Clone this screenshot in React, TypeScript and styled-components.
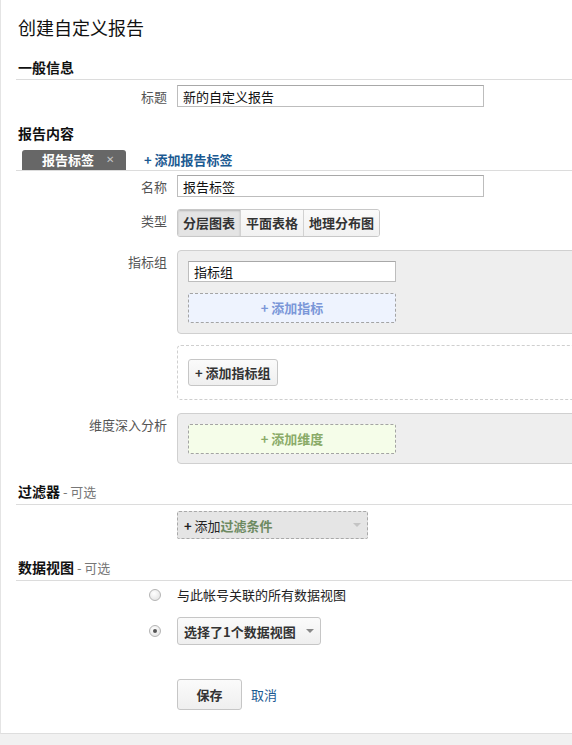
import React from 'react';
import styled, { createGlobalStyle } from 'styled-components';

const GlobalStyle = createGlobalStyle`
  html, body {
    margin: 0;
    padding: 0;
    background: #f1f1f1;
    overflow: hidden;
    font-family: "Noto Sans CJK SC", "Noto Sans", sans-serif;
    color: #222;
  }
`;

const palette = {
  LINK: '#1c5a92',
  LABEL: '#555',
  LINE: '#dcdcdc',
  PANEL: '#eeeeee',
};

const Root = styled.div`
  height: 734px;
  background: #fff;
  border-left: 1px solid #e4e4e4;
  border-bottom: 1px solid #dedede;
  padding-left: 15px;
  box-sizing: border-box;
  overflow: hidden;
`;

const PageTitle = styled.div`
  font-size: 18px;
  line-height: 20px;
  padding: 17px 2px 0;
  color: #111;
`;

const SectionHeader = styled.div<{ $top: number; $line?: boolean }>`
  margin-top: ${(p) => p.$top}px;
  font-size: 14px;
  font-weight: 700;
  line-height: 18px;
  padding: 0 2px ${(p) => (p.$line ? 3 : 0)}px;
  border-bottom: ${(p) => (p.$line ? `1px solid ${palette.LINE}` : 'none')};
  color: #111;
`;

const Optional = styled.span`
  font-weight: 400;
  font-size: 13px;
  color: #777;
`;

const Row = styled.div<{ $top: number }>`
  display: grid;
  grid-template-columns: 151px 1fr;
  column-gap: 10px;
  margin-top: ${(p) => p.$top}px;
  align-items: start;
`;

const Label = styled.div`
  text-align: right;
  font-size: 13px;
  line-height: 16px;
  padding-top: 4px;
  color: ${palette.LABEL};
`;

const TextInput = styled.input<{ $width: number }>`
  width: ${(p) => p.$width}px;
  height: 22px;
  box-sizing: border-box;
  border: 1px solid #bdbdbd;
  border-top-color: #a8a8a8;
  padding: 0 5px;
  font-family: inherit;
  font-size: 13px;
  color: #111;
  background: #fff;
  outline: none;
`;

const TabBar = styled.div`
  display: flex;
  align-items: flex-end;
  margin-top: 8px;
  border-bottom: 1px solid ${palette.LINE};
  padding-left: 6px;
`;

const Tab = styled.div`
  width: 104px;
  height: 20px;
  background: #676767;
  border-radius: 3px 3px 0 0;
  color: #fff;
  font-size: 13px;
  font-weight: 700;
  line-height: 20px;
  display: flex;
  align-items: center;
  padding-left: 20px;
  box-sizing: border-box;
  gap: 12px;
`;

const TabClose = styled.span`
  color: #c4c4c4;
  font-size: 10px;
  font-weight: 700;
  font-family: "DejaVu Sans", sans-serif;
`;

const LinkText = styled.a<{ $bold?: boolean }>`
  color: ${palette.LINK};
  font-size: 13px;
  font-weight: ${(p) => (p.$bold ? 700 : 400)};
  text-decoration: none;
  cursor: pointer;
`;

const AddTabLink = styled(LinkText)`
  margin-left: 18px;
  line-height: 20px;
`;

const SegmentGroup = styled.div`
  display: inline-flex;
  border: 1px solid #c8c8c8;
  border-radius: 3px;
  overflow: hidden;
  height: 28px;
  box-sizing: border-box;
`;

const Segment = styled.div<{ $active?: boolean }>`
  padding: 0 5px;
  font-size: 13px;
  font-weight: 700;
  line-height: 26px;
  color: #333;
  background: ${(p) => (p.$active ? '#e4e4e4' : 'linear-gradient(#fafafa, #f1f1f1)')};
  box-shadow: ${(p) => (p.$active ? 'inset 0 1px 2px rgba(0,0,0,0.2)' : 'none')};
  & + & {
    border-left: 1px solid #d2d2d2;
  }
`;

const GroupPanel = styled.div<{ $dashed?: boolean; $height: number }>`
  width: 420px;
  height: ${(p) => p.$height}px;
  box-sizing: border-box;
  padding: 10px;
  border-radius: 4px;
  background: ${(p) => (p.$dashed ? '#fff' : palette.PANEL)};
  border: 1px ${(p) => (p.$dashed ? 'dashed #cfcfcf' : 'solid #d0d0d0')};
  display: flex;
  flex-direction: column;
  align-items: flex-start;
`;

const DropZone = styled.div<{ $tone: 'blue' | 'green'; $top?: number }>`
  width: 208px;
  height: 30px;
  margin-top: ${(p) => p.$top ?? 0}px;
  box-sizing: border-box;
  border: 1px dashed #a4a4a4;
  border-radius: 2px;
  background: ${(p) => (p.$tone === 'blue' ? '#eef3fe' : '#f5fde9')};
  color: ${(p) => (p.$tone === 'blue' ? '#7b97d8' : '#8aab68')};
  font-size: 13px;
  font-weight: 700;
  line-height: 28px;
  text-align: center;
`;

const PlainButton = styled.button<{ $width?: number; $height: number; $top?: number }>`
  ${(p) => (p.$width ? `width: ${p.$width}px;` : '')}
  height: ${(p) => p.$height}px;
  margin-top: ${(p) => p.$top ?? 0}px;
  padding: 0 6px;
  border: 1px solid #c6c6c6;
  border-radius: 3px;
  background: linear-gradient(#fbfbfb, #efefef);
  font-family: inherit;
  font-size: 13px;
  font-weight: 700;
  color: #333;
  display: inline-flex;
  align-items: center;
  justify-content: center;
  gap: 10px;
`;

const Caret = styled.span<{ $color?: string }>`
  width: 0;
  height: 0;
  border-left: 4px solid transparent;
  border-right: 4px solid transparent;
  border-top: 4px solid ${(p) => p.$color ?? '#888'};
`;

const FilterSelect = styled.div`
  width: 191px;
  height: 28px;
  margin-top: 6px;
  box-sizing: border-box;
  border: 1px dashed #a9a9a9;
  border-radius: 2px;
  background: #e5e5e5;
  display: flex;
  align-items: center;
  justify-content: space-between;
  padding: 0 6px;
  font-size: 13px;
  color: #222;
`;

const FilterGreen = styled.span`
  color: #6d8a62;
  font-weight: 700;
`;

const RadioRow = styled.div<{ $top: number }>`
  display: grid;
  grid-template-columns: 151px 1fr;
  column-gap: 10px;
  align-items: center;
  margin-top: ${(p) => p.$top}px;
`;

const RadioCell = styled.div`
  display: flex;
  justify-content: flex-end;
  padding-right: 6px;
`;

const Radio = styled.span<{ $checked?: boolean }>`
  width: 12px;
  height: 12px;
  border-radius: 50%;
  border: 1px solid #b4b4b4;
  box-sizing: border-box;
  background: radial-gradient(circle at 40% 35%, #fff, #dedede);
  display: flex;
  align-items: center;
  justify-content: center;
  &::after {
    content: '';
    width: 4px;
    height: 4px;
    border-radius: 50%;
    background: ${(p) => (p.$checked ? '#555' : 'transparent')};
  }
`;

const RadioText = styled.span`
  font-size: 13px;
  line-height: 16px;
  color: #222;
`;

const Actions = styled.div`
  display: flex;
  align-items: center;
  gap: 9px;
  margin-top: 34px;
  padding-left: 161px;
`;

export default function App() {
  return (
    <Root>
      <GlobalStyle />
      <PageTitle>创建自定义报告</PageTitle>

      <SectionHeader $top={21} $line>一般信息</SectionHeader>
      <Row $top={5}>
        <Label>标题</Label>
        <TextInput $width={307} defaultValue="新的自定义报告" />
      </Row>

      <SectionHeader $top={17}>报告内容</SectionHeader>
      <TabBar>
        <Tab>
          报告标签<TabClose>✕</TabClose>
        </Tab>
        <AddTabLink $bold>+ 添加报告标签</AddTabLink>
      </TabBar>
      <Row $top={4}>
        <Label>名称</Label>
        <TextInput $width={307} defaultValue="报告标签" />
      </Row>
      <Row $top={12}>
        <Label>类型</Label>
        <div>
          <SegmentGroup>
            <Segment $active>分层图表</Segment>
            <Segment>平面表格</Segment>
            <Segment>地理分布图</Segment>
          </SegmentGroup>
        </div>
      </Row>
      <Row $top={13}>
        <Label>指标组</Label>
        <GroupPanel $height={84}>
          <TextInput $width={208} defaultValue="指标组" />
          <DropZone $tone="blue" $top={11}>+ 添加指标</DropZone>
        </GroupPanel>
      </Row>
      <Row $top={11}>
        <div />
        <GroupPanel $dashed $height={55}>
          <PlainButton $height={27} $top={3}>+ 添加指标组</PlainButton>
        </GroupPanel>
      </Row>
      <Row $top={13}>
        <Label>维度深入分析</Label>
        <GroupPanel $height={51}>
          <DropZone $tone="green">+ 添加维度</DropZone>
        </GroupPanel>
      </Row>

      <SectionHeader $top={18} $line>
        过滤器<Optional> - 可选</Optional>
      </SectionHeader>
      <Row $top={0}>
        <div />
        <FilterSelect>
          <span>
            <b>+</b> 添加<FilterGreen>过滤条件</FilterGreen>
          </span>
          <Caret $color="#c4c4c4" />
        </FilterSelect>
      </Row>

      <SectionHeader $top={19} $line>
        数据视图<Optional> - 可选</Optional>
      </SectionHeader>
      <RadioRow $top={6}>
        <RadioCell>
          <Radio />
        </RadioCell>
        <RadioText>与此帐号关联的所有数据视图</RadioText>
      </RadioRow>
      <RadioRow $top={14}>
        <RadioCell>
          <Radio $checked />
        </RadioCell>
        <div>
          <PlainButton $height={28}>
            选择了1个数据视图
            <Caret />
          </PlainButton>
        </div>
      </RadioRow>

      <Actions>
        <PlainButton $width={65} $height={31}>保存</PlainButton>
        <LinkText>取消</LinkText>
      </Actions>
    </Root>
  );
}
